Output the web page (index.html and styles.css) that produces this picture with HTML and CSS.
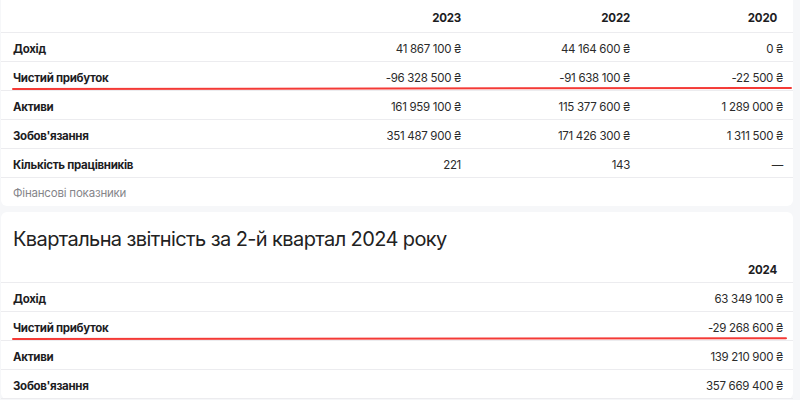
FILE: index.html
```html
<!DOCTYPE html>
<html lang="uk">
<head>
<meta charset="utf-8">
<link rel="stylesheet" href="styles.css">
</head>
<body>
<div class="page">
  <section class="card card-top">
    <div class="table t4">
      <div class="row head">
        <div class="cell label"></div>
        <div class="cell num">2023</div>
        <div class="cell num">2022</div>
        <div class="cell num last">2020</div>
      </div>
      <div class="row">
        <div class="cell label">Дохід</div>
        <div class="cell num">41 867 100 ₴</div>
        <div class="cell num">44 164 600 ₴</div>
        <div class="cell num">0 ₴</div>
      </div>
      <div class="row mark mark1">
        <div class="cell label">Чистий прибуток</div>
        <div class="cell num">-96 328 500 ₴</div>
        <div class="cell num">-91 638 100 ₴</div>
        <div class="cell num">-22 500 ₴</div>
      </div>
      <div class="row">
        <div class="cell label">Активи</div>
        <div class="cell num">161 959 100 ₴</div>
        <div class="cell num">115 377 600 ₴</div>
        <div class="cell num">1 289 000 ₴</div>
      </div>
      <div class="row">
        <div class="cell label">Зобов'язання</div>
        <div class="cell num">351 487 900 ₴</div>
        <div class="cell num">171 426 300 ₴</div>
        <div class="cell num">1 311 500 ₴</div>
      </div>
      <div class="row">
        <div class="cell label">Кількість працівників</div>
        <div class="cell num">221</div>
        <div class="cell num">143</div>
        <div class="cell num">—</div>
      </div>
    </div>
    <div class="caption">Фінансові показники</div>
  </section>

  <section class="card">
    <h2 class="title">Квартальна звітність за 2-й квартал 2024 року</h2>
    <div class="table t1">
      <div class="row head">
        <div class="cell label"></div>
        <div class="cell num last">2024</div>
      </div>
      <div class="row">
        <div class="cell label">Дохід</div>
        <div class="cell num">63 349 100 ₴</div>
      </div>
      <div class="row mark mark2">
        <div class="cell label">Чистий прибуток</div>
        <div class="cell num">-29 268 600 ₴</div>
      </div>
      <div class="row">
        <div class="cell label">Активи</div>
        <div class="cell num">139 210 900 ₴</div>
      </div>
      <div class="row">
        <div class="cell label">Зобов'язання</div>
        <div class="cell num">357 669 400 ₴</div>
      </div>
    </div>
  </section>
</div>
</body>
</html>
```

FILE: styles.css
```css
* { box-sizing: border-box; }
html, body {
  margin: 0;
  padding: 0;
  background: #f6f7f9;
  font-family: Inter, "Noto Sans", "Liberation Sans", sans-serif;
  color: #1d1d1f;
}
.page {
  padding: 0 7px 0 1px;
  display: flex;
  flex-direction: column;
  gap: 6px;
}
.card {
  background: #fff;
  border-radius: 6px;
}
.card-top {
  border-top-left-radius: 0;
  border-top-right-radius: 0;
}
.table { display: flex; flex-direction: column; }
.row {
  display: grid;
  align-items: center;
  height: 29px;
  padding-top: 3px;
  border-bottom: 1px solid #ececef;
  position: relative;
}
.t4 .row { grid-template-columns: 1fr 169px 169px 153px; }
.t1 .row { grid-template-columns: 1fr 200px; }
.t4 .row.head { height: 33px; }
.cell {
  font-size: 11.5px;
  line-height: 16px;
  white-space: nowrap;
}
.label {
  padding-left: 12px;
  font-weight: 700;
  letter-spacing: -0.3px;
  color: #1d1d1f;
}
.num {
  text-align: right;
  padding-right: 10px;
  letter-spacing: -0.3px;
  color: #2b2b2b;
}
.head .num { font-weight: 700; color: #1d1d1f; letter-spacing: -0.2px; }
.head .num.last { padding-right: 16px; }
.mark::after {
  content: "";
  position: absolute;
  left: 11px;
  height: 2px;
  background: #f43a36;
  border-radius: 1px;
  transform-origin: left center;
}
.mark1::after { right: 1px; bottom: 0; transform: rotate(-0.08deg); }
.mark2::after { right: 6px; bottom: 0; transform: rotate(-0.06deg); }
.caption {
  height: 28px;
  padding: 2px 0 0 12px;
  display: flex;
  align-items: center;
  font-size: 11.5px;
  letter-spacing: -0.2px;
  color: #85858a;
}
.title {
  margin: 0;
  padding: 13px 12px 0;
  height: 42px;
  font-size: 20px;
  line-height: 28px;
  font-weight: 400;
  letter-spacing: -0.6px;
  color: #222;
}
```
